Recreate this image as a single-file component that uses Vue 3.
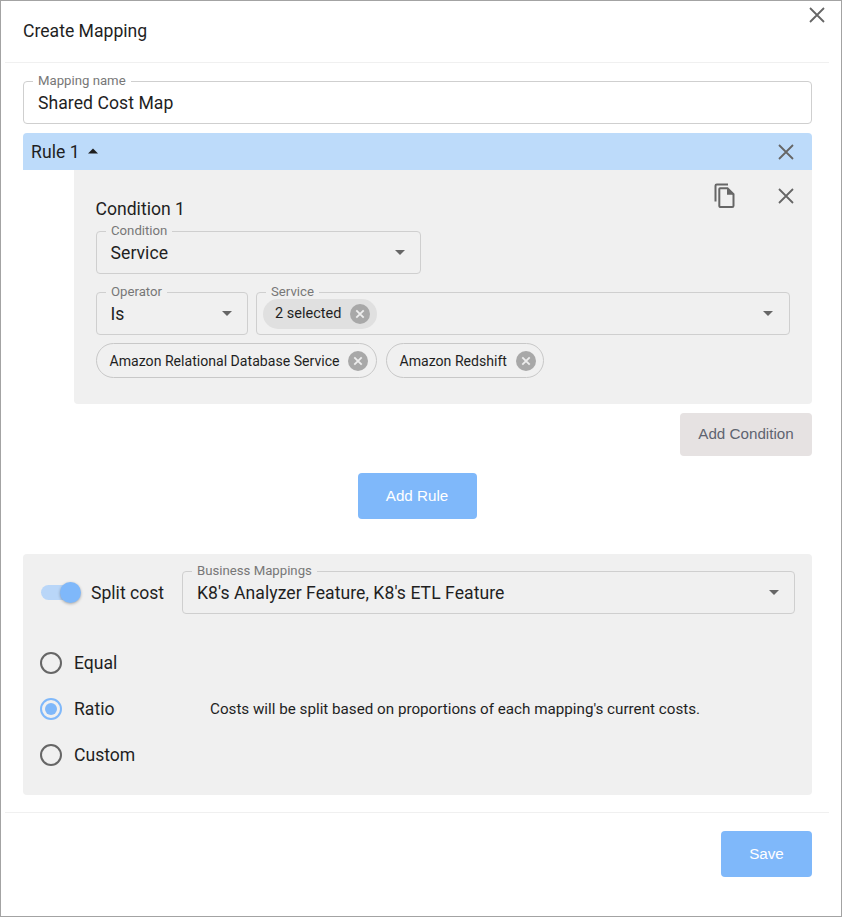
<script setup>
const radios = [
  { label: 'Equal', checked: false },
  { label: 'Ratio', checked: true },
  { label: 'Custom', checked: false },
]
</script>

<template>
  <div class="frame">
    <button class="close-top" aria-label="Close">
      <svg width="24" height="24" viewBox="0 0 24 24"><path class="x" d="M5 5 19 19M19 5 5 19" /></svg>
    </button>
    <header class="title">Create Mapping</header>
    <main class="content">
      <div class="field name-field">
        <span class="legend white">Mapping name</span>
        <span class="value">Shared Cost Map</span>
      </div>

      <div class="rule-bar">
        <span class="rule-title">Rule 1</span>
        <svg class="caret-up" width="10" height="6" viewBox="0 0 10 6"><path d="M0 5.500 5 0.500 10 5.500Z" /></svg>
        <span class="spacer"></span>
        <svg class="rule-close" width="24" height="24" viewBox="0 0 24 24"><path class="x" d="M5 5 19 19M19 5 5 19" /></svg>
      </div>

      <section class="condition">
        <div class="cond-actions">
          <svg width="26" height="26" viewBox="0 0 26 26">
            <path class="copy" d="M3.500 18.500V2.800C3.500 2 4 1.500 4.800 1.500H16" />
            <path class="copy" d="M8 5.200H15.500L21.500 11.200V22.700C21.500 23.500 21 24 20.200 24H9C8 24 7.300 23.500 7.300 22.700V6C7.300 5.500 7.500 5.200 8 5.200Z" />
            <path d="M15 5.500V11.800H21.500Z" fill="#666" />
          </svg>
          <svg width="24" height="24" viewBox="0 0 24 24"><path class="x" d="M5 5 19 19M19 5 5 19" /></svg>
        </div>
        <h3 class="cond-title">Condition 1</h3>
        <div class="field condition-field">
          <span class="legend">Condition</span>
          <span class="value">Service</span>
          <span class="arrow"></span>
        </div>
        <div class="field-row">
          <div class="field operator-field">
            <span class="legend">Operator</span>
            <span class="value">Is</span>
            <span class="arrow"></span>
          </div>
          <div class="field service-field">
            <span class="legend">Service</span>
            <span class="chip filled">
              2 selected
              <svg class="chip-x" width="20" height="20" viewBox="0 0 20 20"><circle cx="10" cy="10" r="10" /><path d="M6.300 6.300 13.700 13.700M13.700 6.300 6.300 13.700" /></svg>
            </span>
            <span class="arrow service-arrow"></span>
          </div>
        </div>
        <div class="chips">
          <span class="chip outlined">
            Amazon Relational Database Service
            <svg class="chip-x" width="20" height="20" viewBox="0 0 20 20"><circle cx="10" cy="10" r="10" /><path d="M6.300 6.300 13.700 13.700M13.700 6.300 6.300 13.700" /></svg>
          </span>
          <span class="chip outlined">
            Amazon Redshift
            <svg class="chip-x" width="20" height="20" viewBox="0 0 20 20"><circle cx="10" cy="10" r="10" /><path d="M6.300 6.300 13.700 13.700M13.700 6.300 6.300 13.700" /></svg>
          </span>
        </div>
      </section>

      <div class="add-condition-row">
        <button class="btn grey">Add Condition</button>
      </div>
      <div class="add-rule-row">
        <button class="btn blue add-rule">Add Rule</button>
      </div>

      <section class="split">
        <div class="split-top">
          <div class="switch"><span class="thumb"></span></div>
          <span class="split-label">Split cost</span>
          <div class="field business-field">
            <span class="legend">Business Mappings</span>
            <span class="value">K8's Analyzer Feature, K8's ETL Feature</span>
            <span class="arrow"></span>
          </div>
        </div>
        <div class="split-bottom">
          <div class="radios">
            <div v-for="r in radios" :key="r.label" class="radio-row">
              <span class="radio" :class="{ on: r.checked }"></span>
              <span class="radio-label">{{ r.label }}</span>
            </div>
          </div>
          <p class="note">Costs will be split based on proportions of each mapping's current costs.</p>
        </div>
      </section>
    </main>
    <footer class="footer">
      <button class="btn blue save">Save</button>
    </footer>
  </div>
</template>

<style>
html, body { margin: 0; background: #fff; }
</style>

<style scoped>
.frame {
  position: relative;
  box-sizing: border-box;
  width: 842px;
  height: 917px;
  border: 1px solid #a3a3a3;
  background: #fff;
  color: #1f1f1f;
  font-family: Roboto, "Liberation Sans", sans-serif;
  overflow: hidden;
}
.x { fill: none; stroke: #666; stroke-width: 1.8; }
.close-top {
  position: absolute;
  top: 2px;
  right: 12px;
  width: 24px;
  height: 24px;
  padding: 0;
  border: 0;
  background: none;
}
.title {
  margin: 0 12px 0 4px;
  padding-left: 18px;
  box-sizing: border-box;
  border-bottom: 1px solid #f0f0f0;
  font-size: 17.600px;
  line-height: 60px;
  height: 62px;
}
.content {
  display: flex;
  flex-direction: column;
  padding: 18px 29px 0 22px;
}
.field {
  position: relative;
  box-sizing: border-box;
  display: flex;
  align-items: center;
  height: 43px;
  padding: 0 14px;
  border: 1px solid #cfcfcf;
  border-radius: 4px;
}
.legend {
  position: absolute;
  top: -9px;
  left: 9px;
  padding: 0 5px;
  background: #f0f0f0;
  color: #777;
  font-size: 13.200px;
  line-height: 15px;
}
.legend.white { background: #fff; }
.value { font-size: 17.600px; letter-spacing: 0.05px; white-space: nowrap; }
.condition .value { margin-left: -0.5px; }
.arrow {
  position: absolute;
  right: 15px;
  top: 18px;
  width: 0;
  height: 0;
  border-left: 5px solid transparent;
  border-right: 5px solid transparent;
  border-top: 5px solid #666;
}
.service-arrow { right: 16px; }
.rule-bar {
  display: flex;
  align-items: center;
  box-sizing: border-box;
  height: 37px;
  margin-top: 9px;
  padding: 0 14px 0 8px;
  background: #bddbfa;
  border-radius: 4px 4px 0 0;
  font-size: 17.600px;
  letter-spacing: 0.05px;
}
.caret-up { margin-left: 8px; margin-bottom: 2px; fill: #1f1f1f; }
.spacer { flex: 1; }
.condition {
  position: relative;
  box-sizing: border-box;
  height: 234px;
  margin-left: 51px;
  padding: 30px 22px 0 22px;
  background: #f0f0f0;
  border-radius: 0 0 4px 4px;
}
.cond-actions {
  position: absolute;
  top: 13px;
  right: 14px;
  display: flex;
  align-items: center;
  gap: 36px;
}
.cond-title {
  margin: 0 0 0 -0.5px;
  font-size: 17.600px;
  font-weight: 400;
  line-height: 18px;
}
.condition-field { width: 325px; margin-top: 13px; }
.field-row { display: flex; gap: 8px; margin-top: 18px; }
.operator-field { width: 152px; }
.service-field { flex: 1; padding-left: 6px; }
.chip {
  display: inline-flex;
  align-items: center;
  box-sizing: border-box;
  height: 30px;
  border-radius: 15px;
  color: #1f1f1f;
  font-size: 14.100px;
  white-space: nowrap;
}
.chip.filled {
  padding: 0 7px 0 12px;
  gap: 9px;
  background: #e0e0e0;
  font-size: 14.500px;
}
.chip.outlined {
  height: 35px;
  border-radius: 18px;
  padding: 0 7.500px 0 12.500px;
  gap: 9px;
  border: 1px solid #c8c8c8;
}
.chip-x { flex: none; }
.chip-x circle { fill: #a8a8a8; }
.chip-x path { fill: none; stroke: #eee; stroke-width: 1.800; }
.chips { display: flex; gap: 9px; margin-top: 8px; }
.add-condition-row { display: flex; justify-content: flex-end; margin-top: 9px; }
.btn {
  display: block;
  padding: 0 0 2px;
  border: 0;
  border-radius: 4px;
  font-family: "Liberation Sans", Arial, sans-serif;
  font-size: 15.200px;
}
.btn.grey {
  width: 132px;
  height: 43px;
  background: #e6e2e2;
  color: #5f6470;
}
.btn.blue { background: #7fb8fa; color: #fff; }
.add-rule-row { display: flex; justify-content: center; margin-top: 17px; padding-right: 1px; }
.add-rule { width: 119px; height: 46px; }
.split {
  box-sizing: border-box;
  height: 241px;
  margin-top: 35px;
  padding: 17px 17px 0 18px;
  background: #f0f0f0;
  border-radius: 4px;
}
.split-top { display: flex; align-items: center; }
.switch {
  position: relative;
  flex: none;
  width: 36px;
  height: 15px;
  border-radius: 8px;
  background: #b9d6f8;
}
.thumb {
  position: absolute;
  top: -3px;
  right: -4px;
  width: 21px;
  height: 21px;
  border-radius: 50%;
  background: #7fb8fa;
  box-shadow: 0 1px 3px rgba(0, 0, 0, 0.3);
}
.split-label { flex: none; width: 91px; margin-left: 14px; font-size: 17.600px; white-space: nowrap; }
.business-field { flex: 1; }
.split-bottom { display: flex; align-items: center; margin-top: 38px; margin-left: -1px; }
.radios { display: flex; flex-direction: column; gap: 24px; width: 170px; flex: none; }
.radio-row { display: flex; align-items: center; height: 22px; gap: 12px; }
.radio {
  position: relative;
  box-sizing: border-box;
  width: 22px;
  height: 22px;
  border: 2px solid #666;
  border-radius: 50%;
}
.radio.on { border-color: #7fb8fa; }
.radio.on::after {
  content: "";
  position: absolute;
  inset: 3px;
  border-radius: 50%;
  background: #7fb8fa;
}
.radio-label { font-size: 17.600px; }
.note { margin: 0; font-size: 15.200px; white-space: nowrap; }
.footer { display: flex; justify-content: flex-end; margin: 17px 12px 0 4px; padding: 18px 17px 0 0; border-top: 1px solid #f0f0f0; }
.save { width: 91px; height: 46px; }
.copy { fill: none; stroke: #666; stroke-width: 2; }
</style>
